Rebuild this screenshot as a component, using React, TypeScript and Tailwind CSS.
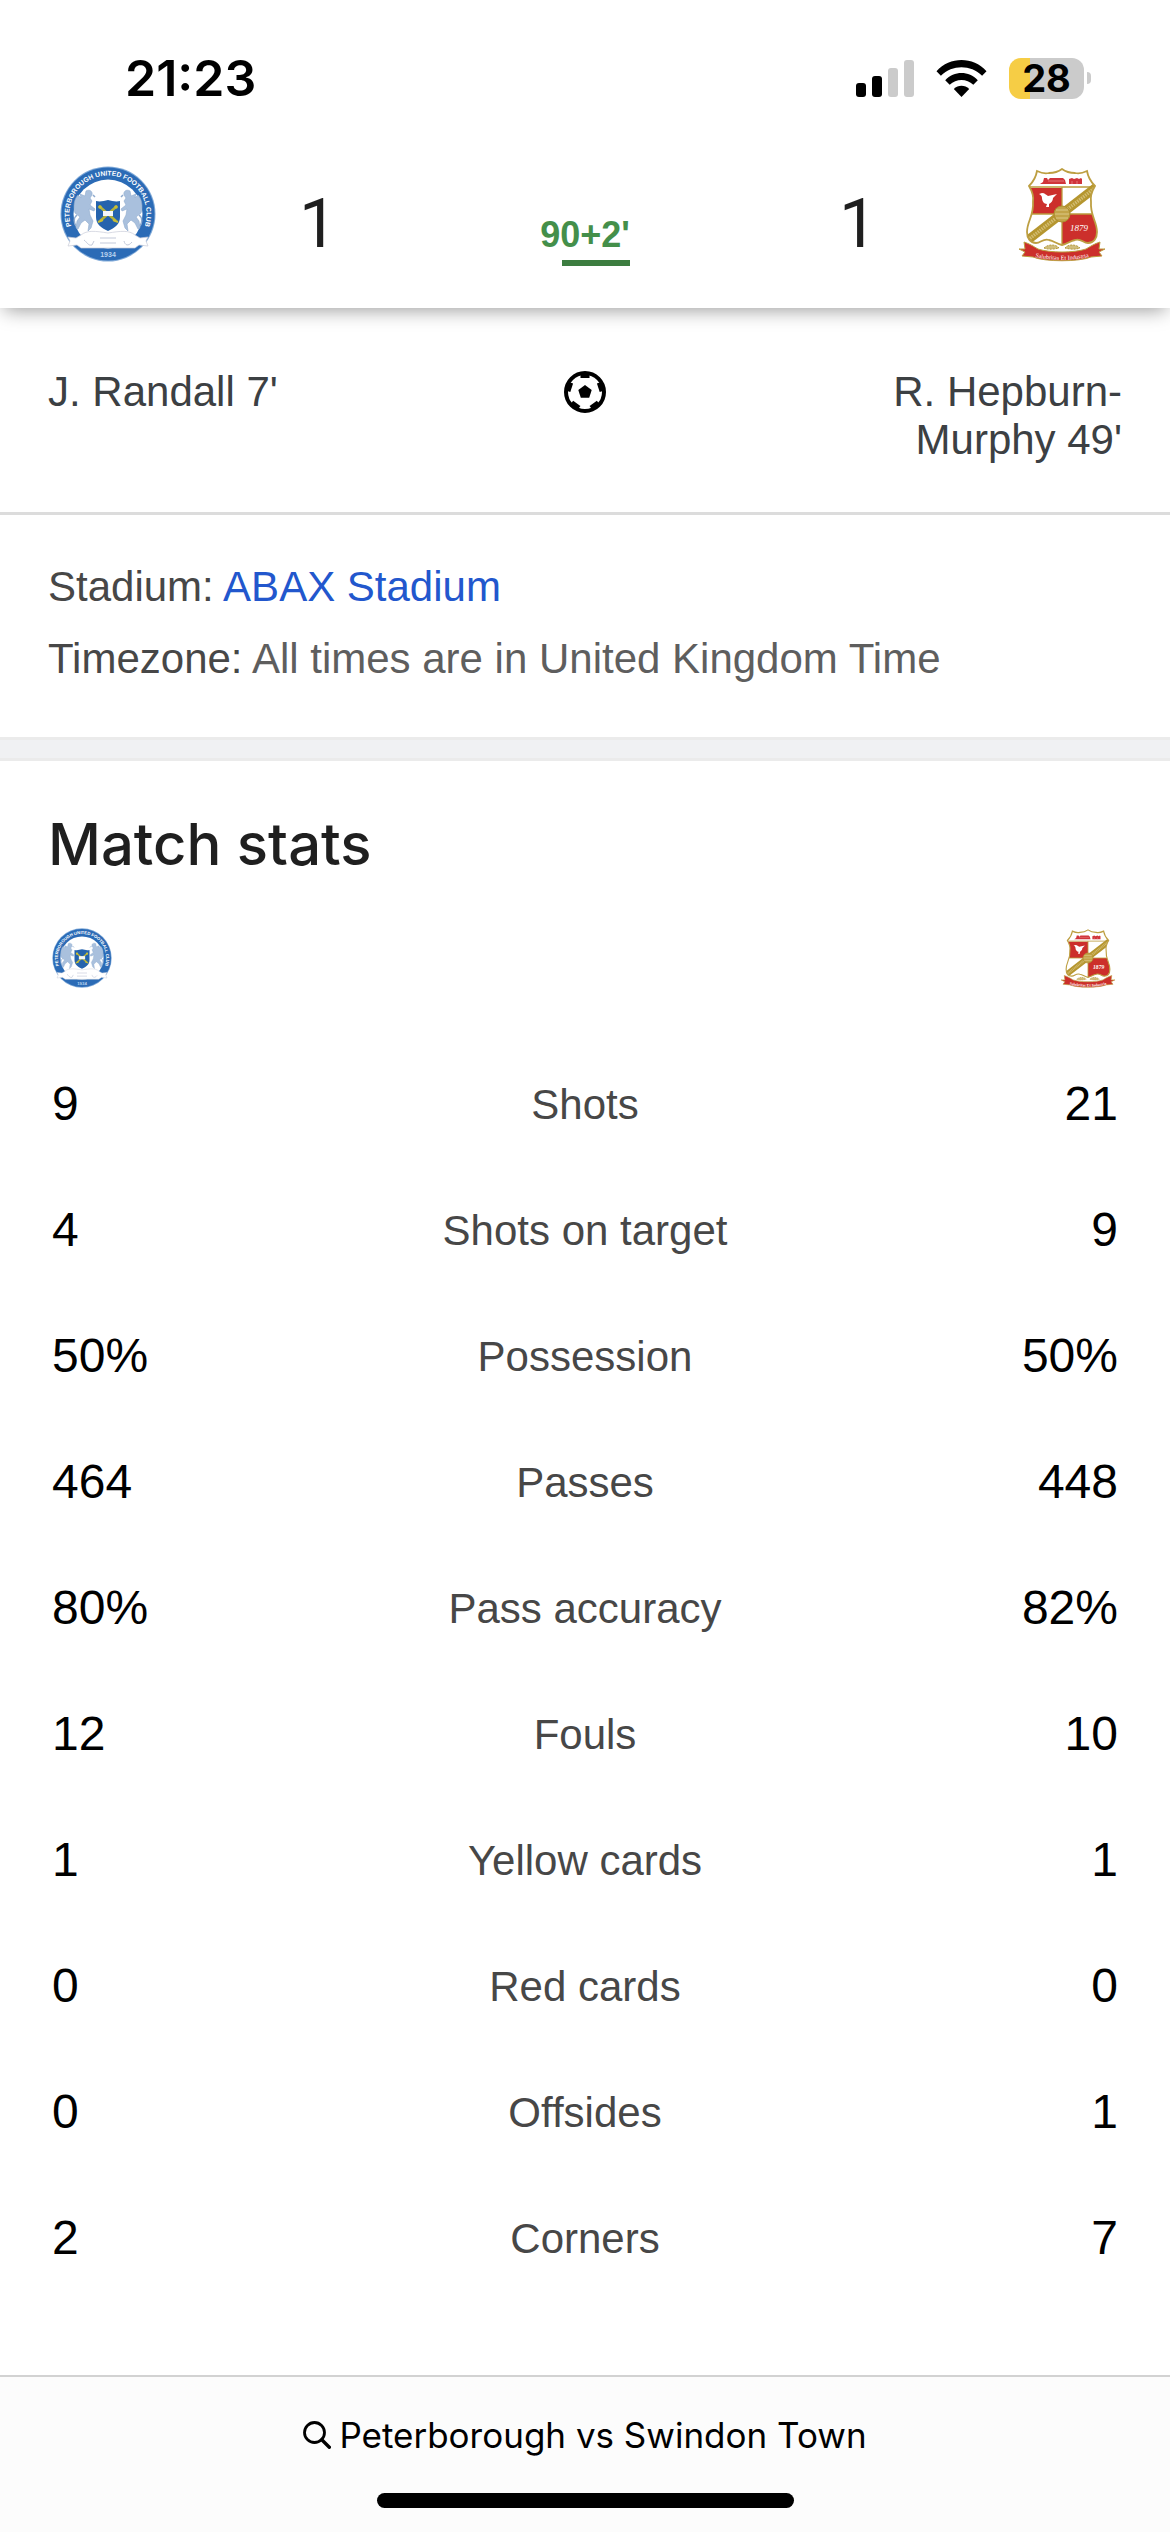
type CrestProps = {
  className?: string;
};

type Stat = {
  label: string;
  home: string;
  away: string;
};

const stats: Stat[] = [
  { label: "Shots", home: "9", away: "21" },
  { label: "Shots on target", home: "4", away: "9" },
  { label: "Possession", home: "50%", away: "50%" },
  { label: "Passes", home: "464", away: "448" },
  { label: "Pass accuracy", home: "80%", away: "82%" },
  { label: "Fouls", home: "12", away: "10" },
  { label: "Yellow cards", home: "1", away: "1" },
  { label: "Red cards", home: "0", away: "0" },
  { label: "Offsides", home: "0", away: "1" },
  { label: "Corners", home: "2", away: "7" },
];

const Griffin = () => (
  <g fill="#a9c0dd" stroke="#8fabcf" strokeWidth="0.6">
    <path d="M26 25c3-2 7 0 6 4l-2 3 2 3-2 4 5 4-1 2-5-2 1 6 3 6-2 7-3 3 1-7-4-4-4 3-3 6-2-1 1-7 3-4-5-4c-2-6-1-14 3-18l3 3-1-4 5 2z" />
    <path d="M17 49c-4 3-3 8-1 11M33 29l2 2" fill="none" strokeWidth="1.5" />
  </g>
);

const PeterboroughCrest = ({ className }: CrestProps) => (
  <svg viewBox="0 0 96 96" className={className} role="img" aria-label="Peterborough United">
    <defs>
      <path id="posh-arc" d="M12.300 62.800A38.600 38.600 0 1 1 83.700 62.800" />
    </defs>
    <circle cx="48" cy="48" r="47.500" fill="#7fa9d8" />
    <circle cx="48" cy="48" r="46.500" fill="#2b6bb6" />
    <circle cx="48" cy="48" r="34.500" fill="#fff" />
    <text fill="#fff" fontSize="6.800" fontWeight="700" fontFamily="Liberation Sans, sans-serif">
      <textPath href="#posh-arc" startOffset="50%" textAnchor="middle">
        PETERBOROUGH UNITED FOOTBALL CLUB
      </textPath>
    </text>
    <Griffin />
    <g transform="translate(96 0) scale(-1 1)">
      <Griffin />
    </g>
    <path d="M36 35c4 1 8 0 12-1 4 1 8 2 12 1v16c0 7-5 11-12 14-7-3-12-7-12-14z" fill="#2563ad" />
    <path d="M39 40l17 15M57 40L40 55" stroke="#b5b23a" strokeWidth="2.400" />
    <circle cx="40" cy="41" r="1.800" fill="#c9bf35" />
    <circle cx="56" cy="41" r="1.800" fill="#c9bf35" />
    <path d="M38 56l5-2M58 56l-5-2" stroke="#c9bf35" strokeWidth="2" />
    <rect x="43" y="45" width="10" height="5" fill="#f4f7fb" />
    <path
      d="M8 71l8 1 5-3c6-5 14-4 27-2 13-2 21-3 27 2l5 3 8-1-2 4 2 5-9-1-4 3H21l-4-3-9 1 2-5z"
      fill="#fff"
      stroke="#c9ccd8"
      strokeWidth="0.7"
    />
    <path
      d="M24 74c3 2 4 6 8 5l2-4M40 72h16M40 77h16M64 75c1 4 4 6 8 1"
      fill="none"
      stroke="#c3c9d9"
      strokeWidth="1"
    />
    <text x="48" y="91" textAnchor="middle" fill="#b9d2ee" fontSize="7" fontWeight="700" fontFamily="Liberation Sans, sans-serif">
      1934
    </text>
  </svg>
);

const SwindonCrest = ({ className }: CrestProps) => (
  <svg viewBox="0 0 96 96" className={className} role="img" aria-label="Swindon Town">
    <defs>
      <clipPath id="swindon-shield">
        <path d="M48 3c-4 3-9 4-13 4-4 1-8 0-12-2-1 6-4 11-8 15 3 5 5 10 4 16 1 14-6 19-6 30 0 6 3 11 9 11 5 0 7-5 13-3 5 1 8 4 13 5 5-1 8-4 13-5 6-2 8 3 13 3 6 0 9-5 9-11 0-11-7-16-6-30-1-6 1-11 4-16-4-4-7-9-8-15-4 2-8 3-12 2-4 0-9-1-13-4z" />
      </clipPath>
      <path id="swindon-ribbon" d="M18 90c14 5 46 5 60 0" />
    </defs>
    <g clipPath="url(#swindon-shield)">
      <path d="M0 0h96v96H0z" fill="#fff" />
      <path d="M10 22h38v26H10zM48 48h38v34H48z" fill="#cc2f2b" />
      <path d="M10 21h76M48 21v60M10 48h76" stroke="#bb9c3d" strokeWidth="1.300" />
      <path d="M10 77L86 18" stroke="#b5962f" strokeWidth="9" />
      <path d="M10 77L86 18" stroke="#d2bc71" strokeWidth="3.500" strokeDasharray="1.500 1" />
    </g>
    <path
      d="M48 3c-4 3-9 4-13 4-4 1-8 0-12-2-1 6-4 11-8 15 3 5 5 10 4 16 1 14-6 19-6 30 0 6 3 11 9 11 5 0 7-5 13-3 5 1 8 4 13 5 5-1 8-4 13-5 6-2 8 3 13 3 6 0 9-5 9-11 0-11-7-16-6-30-1-6 1-11 4-16-4-4-7-9-8-15-4 2-8 3-12 2-4 0-9-1-13-4z"
      fill="none"
      stroke="#bd9f42"
      strokeWidth="1.800"
    />
    <circle cx="48" cy="48" r="8" fill="#c2a449" stroke="#ad8f31" strokeWidth="1" />
    <path d="M42 44h12M41 48h14M42 52h12" stroke="#dcc987" strokeWidth="1" />
    {/* steam train */}
    <path
      d="M26 18l3-2 1-4h3l1 2 2-2h13l2 2 1 4zM55 13l3-1 2 1 3-1 2 1 2-1 1 1v5H55z"
      fill="#d0343a"
    />
    <path d="M34 15h16M58 15v3M63 15v3" stroke="#e88688" strokeWidth="0.8" />
    {/* robin */}
    <path d="M25 28l3-1c3 0 4 2 6 3l9-2-4 4c0 3-2 5-4 6v3h-3l1-3c-3 0-5-3-5-6 0-2-1-3-3-4z" fill="#fff" />
    <text x="65" y="65" textAnchor="middle" fill="#fff" fontSize="9" fontStyle="italic" fontFamily="Liberation Serif, serif">
      1879
    </text>
    <path
      d="M30 82c4-4 12-4 15 0-4 1-10 2-15 0zM51 82c3-4 11-4 15 0-5 2-11 1-15 0z"
      fill="#cfbd7b"
      stroke="#b5993b"
      strokeWidth="1"
      strokeDasharray="2 1"
    />
    <path
      d="M5 83l6 0-1-7c6 2 9 4 14 7 12 4 36 4 48 0 5-3 8-5 14-7l-1 7 6 0-6 3 3 4-11 1c-12 5-46 5-58 0l-11-1 3-4z"
      fill="#cc2f2b"
      stroke="#bd9f42"
      strokeWidth="1"
    />
    <text fill="#fff" fontSize="6" fontFamily="Liberation Serif, serif">
      <textPath href="#swindon-ribbon" startOffset="50%" textAnchor="middle">
        Salubritas Et Industria
      </textPath>
    </text>
  </svg>
);

const Football = () => (
  <svg viewBox="0 0 42 42" className="w-[42px] h-[42px]" role="img" aria-label="Goals">
    <defs>
      <clipPath id="ball">
        <circle cx="21" cy="21" r="21" />
      </clipPath>
    </defs>
    <circle cx="21" cy="21" r="19" fill="#fff" stroke="#000" strokeWidth="4" />
    <g clipPath="url(#ball)">
      <path d="M21 14l6.700 4.900-2.500 7.900h-8.400l-2.500-7.900z" />
      <path d="M16.500 2h9v5h-9z" />
      <path d="M16.500 2h9v5h-9z" transform="rotate(72 21 21)" />
      <path d="M16.500 2h9v5h-9z" transform="rotate(144 21 21)" />
      <path d="M16.500 2h9v5h-9z" transform="rotate(216 21 21)" />
      <path d="M16.500 2h9v5h-9z" transform="rotate(288 21 21)" />
    </g>
  </svg>
);

const Score = ({ value }: { value: number }) => (
  <span className="mb-1 pl-1.5 text-center font-[Roboto,sans-serif] text-[68px] leading-[76px] text-[#1f1f1f]">
    {value}
  </span>
);

const StatusBar = () => (
  <div className="flex h-[156px] items-center justify-between pl-[125px] pr-[79px] font-[Inter,sans-serif] text-black">
    <span className="text-[50px] leading-none font-semibold">21:23</span>
    <div className="flex items-center gap-[22px]">
      <div className="flex items-end gap-[6px]">
        <span className="w-[10px] h-[14px] rounded-[3px] bg-black" />
        <span className="w-[10px] h-[21px] rounded-[3px] bg-black" />
        <span className="w-[10px] h-[29px] rounded-[3px] bg-[#cbcbcb]" />
        <span className="w-[10px] h-[37px] rounded-[3px] bg-[#cbcbcb]" />
      </div>
      <svg viewBox="0 0 51 37" className="w-[51px] h-[37px]" role="img" aria-label="Wi-Fi">
        <path d="M.500 11.200C14-3.700 37-3.700 50.500 11.200l-4.400 4.500C34.500 4.400 16.500 4.400 4.900 15.700z" />
        <path d="M9.200 20.200c9-9.700 23.600-9.700 32.600 0l-4.500 4.600c-6.600-6.400-17-6.400-23.600 0z" />
        <path d="M17.800 29c4.300-4.300 11.100-4.300 15.400 0l-7.700 8z" />
      </svg>
      <div className="flex items-center gap-[3px]">
        <div className="flex w-[75px] h-[41px] items-center justify-center rounded-[12px] bg-linear-to-r from-[#f6cd45] from-28% to-[#cbcbcb] to-28%">
          <span className="text-[38px] leading-none font-bold">28</span>
        </div>
        <span className="w-[4px] h-[12px] rounded-r-full bg-[#cbcbcb]" />
      </div>
    </div>
  </div>
);

const App = () => {
  return (
    <div className="flex flex-col min-h-screen bg-white font-['Liberation_Sans',sans-serif] text-[42px] text-[#474747]">
      <header className="relative bg-white shadow-[0_6px_18px_-4px_rgba(0,0,0,0.4)]">
        <StatusBar />
        <div className="grid grid-cols-[1fr_270px_270px_270px_1fr] items-end px-[60px] pt-[10px] pb-[42px]">
          <PeterboroughCrest className="w-24 h-24 mb-1" />
          <Score value={1} />
          <div className="flex flex-col justify-self-center text-[36px] leading-[36px] font-bold text-[#448f4a]">
            <span>90+2'</span>
            <span className="mt-[7px] h-[6px] w-[68px] self-end bg-[#3c7d40]" />
          </div>
          <Score value={1} />
          <SwindonCrest className="w-24 h-24 mb-1 justify-self-end" />
        </div>
      </header>

      <section className="grid grid-cols-3 border-b-3 border-[#dcdcdc] px-12 pt-[60px] pb-12 leading-[48px] text-[#3c4043]">
        <p>J. Randall 7'</p>
        <div className="flex h-12 items-center justify-center">
          <Football />
        </div>
        <p className="text-right">R. Hepburn-Murphy 49'</p>
      </section>

      <section className="px-12 pt-9 pb-[42px] leading-[72px]">
        <p>
          Stadium:{" "}
          <a href="#stadium" className="text-[#2257cd]">
            ABAX Stadium
          </a>
        </p>
        <p>
          Timezone: <span className="text-[#5e5e5e]">All times are in United Kingdom Time</span>
        </p>
      </section>

      <div className="h-6 border-y-3 border-[#ebebeb] bg-[#f0f1f3]" />

      <main className="pt-[53px]">
        <h2 className="mb-[54px] px-12 font-[Inter,sans-serif] text-[58px] leading-[60px] font-medium text-[#1f1f1f]">
          Match stats
        </h2>
        <div className="px-[52px]">
          <table className="w-full table-fixed">
            <thead>
              <tr className="h-[113px] align-top">
                <th className="w-1/4">
                  <PeterboroughCrest className="w-[60px] h-[60px]" />
                </th>
                <td />
                <th className="w-1/4">
                  <SwindonCrest className="w-[60px] h-[60px] ml-auto" />
                </th>
              </tr>
            </thead>
            <tbody>
              {stats.map((stat) => (
                <tr key={stat.label} className="h-[126px]">
                  <td className="text-[48px] text-black">{stat.home}</td>
                  <th className="font-normal">{stat.label}</th>
                  <td className="text-right text-[48px] text-black">{stat.away}</td>
                </tr>
              ))}
            </tbody>
          </table>
        </div>
      </main>

      <footer className="mt-auto flex flex-col items-center border-t-2 border-[#d2d2d2] bg-[#fcfcfc] pt-9 pb-6 font-[Inter,sans-serif] text-[35px] leading-[44px] text-black">
        <a href="#search" className="flex items-center gap-2">
          <svg viewBox="0 0 28 28" className="w-7 h-7" fill="none" stroke="currentColor" aria-hidden="true">
            <circle cx="11.500" cy="11.500" r="10" strokeWidth="2.800" />
            <path d="M18.800 18.800l7.500 7.500" strokeWidth="3.400" strokeLinecap="round" />
          </svg>
          Peterborough vs Swindon Town
        </a>
        <span className="mt-[36px] h-[15px] w-[417px] rounded-full bg-black" />
      </footer>
    </div>
  );
};

export default App;
